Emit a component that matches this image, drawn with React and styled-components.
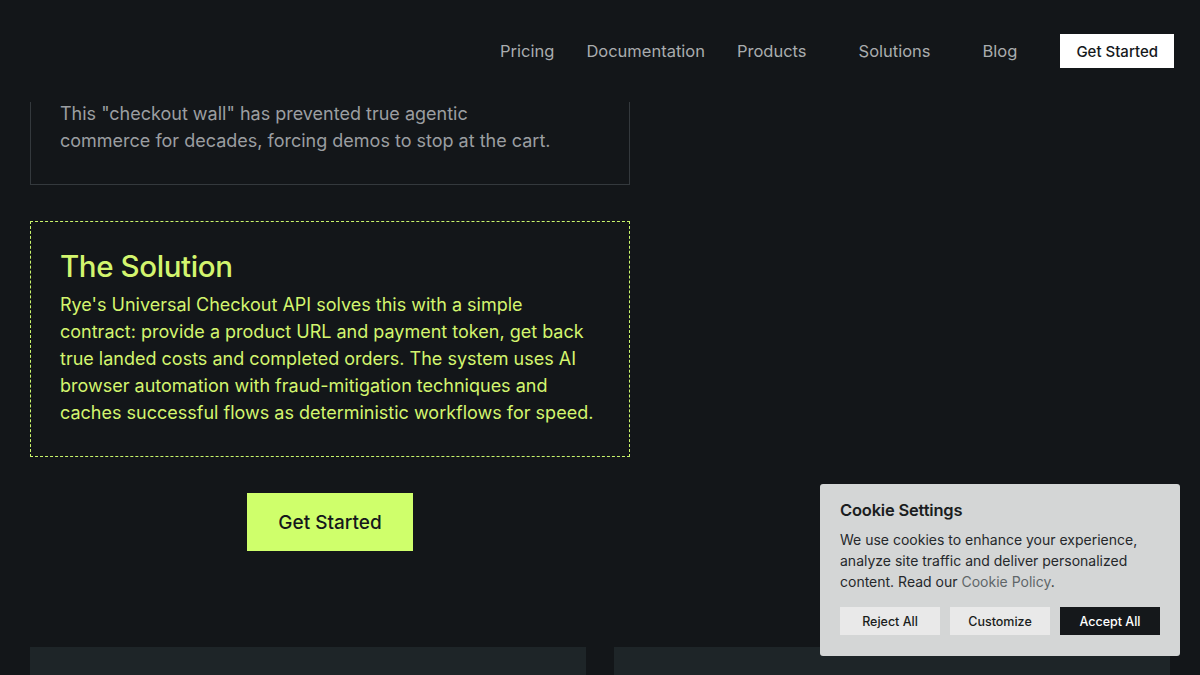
import React from "react";
import styled, { createGlobalStyle } from "styled-components";

const GlobalStyle = createGlobalStyle`
  body {
    margin: 0;
    background: #131619;
    font-family: Inter, "Liberation Sans", sans-serif;
    overflow: hidden;
  }
`;

const Header = styled.header`
  position: fixed;
  top: 0;
  left: 0;
  right: 0;
  height: 102px;
  background: #131619;
  display: flex;
  justify-content: flex-end;
  align-items: center;
  padding-right: 26px;
  z-index: 10;
`;

const Nav = styled.nav`
  display: flex;
  align-items: center;
  gap: 32px;
`;

const NavLink = styled.a`
  color: #a9acae;
  font-size: 16.5px;
  text-decoration: none;
  padding-right: ${(p) => (p.$menu ? "20px" : "0")};
`;

const NavButton = styled.a`
  margin-left: 11px;
  background: #ffffff;
  color: #15181b;
  font-size: 15px;
  font-weight: 500;
  height: 34px;
  padding: 0 16px;
  display: flex;
  align-items: center;
  text-decoration: none;
`;

const Main = styled.main`
  padding: 86px 30px 0;
`;

const Column = styled.div`
  width: 600px;
  display: flex;
  flex-direction: column;
  gap: 36px;
`;

const Card = styled.section`
  border: 1px ${(p) => (p.$accent ? "dashed #c9f56b" : "solid #34393d")};
  padding: ${(p) => (p.$accent ? "26px 29px 30px" : "13px 29px 30px")};
  color: ${(p) => (p.$accent ? "#d3f56e" : "#9b9ea1")};
`;

const Heading = styled.h2`
  margin: 0 0 7px;
  font-size: 29.5px;
  font-weight: 500;
  letter-spacing: -0.4px;
  color: #d3f56e;
`;

const Text = styled.p`
  margin: 0;
  font-size: 18px;
  line-height: 27px;
`;

const CtaRow = styled.div`
  display: flex;
  justify-content: center;
`;

const CtaButton = styled.a`
  background: #cfff6b;
  color: #15181b;
  font-size: 19px;
  font-weight: 500;
  width: 166px;
  height: 58px;
  display: flex;
  align-items: center;
  justify-content: center;
  text-decoration: none;
`;

const Grid = styled.div`
  margin-top: 96px;
  display: grid;
  grid-template-columns: 1fr 1fr;
  gap: 28px;
`;

const Panel = styled.div`
  background: #1e2528;
  height: 200px;
`;

const Cookie = styled.div`
  position: fixed;
  right: 20px;
  bottom: 19px;
  width: 320px;
  padding: 16px 20px 21px;
  background: #d4d6d6;
  border-radius: 3px;
  color: #1a1d20;
  z-index: 20;
`;

const CookieTitle = styled.h3`
  margin: 0 0 9px;
  font-size: 16.5px;
  font-weight: 600;
  letter-spacing: -0.2px;
`;

const CookieText = styled.p`
  margin: 0 0 15px;
  font-size: 14px;
  line-height: 21px;
  color: #25282b;
`;

const PolicyLink = styled.a`
  color: #5f6669;
  text-decoration: none;
`;

const Buttons = styled.div`
  display: flex;
  gap: 10px;
`;

const CookieButton = styled.button`
  width: 100px;
  height: 28px;
  border: none;
  border-radius: 0;
  font-family: inherit;
  font-size: 12.5px;
  font-weight: 500;
  background: ${(p) => (p.$primary ? "#15181b" : "#e9e9e9")};
  color: ${(p) => (p.$primary ? "#ffffff" : "#1a1d20")};
`;

export default function App() {
  return (
    <>
      <GlobalStyle />
      <Header>
        <Nav>
          <NavLink>Pricing</NavLink>
          <NavLink>Documentation</NavLink>
          <NavLink $menu>Products</NavLink>
          <NavLink $menu>Solutions</NavLink>
          <NavLink>Blog</NavLink>
          <NavButton>Get Started</NavButton>
        </Nav>
      </Header>

      <Main>
        <Column>
          <Card>
            <Text>
              This "checkout wall" has prevented true agentic
              <br />
              commerce for decades, forcing demos to stop at the cart.
            </Text>
          </Card>
          <Card $accent>
            <Heading>The Solution</Heading>
            <Text>
              Rye's Universal Checkout API solves this with a simple contract:
              provide a product URL and payment token, get back true landed
              costs and completed orders. The system uses AI browser automation
              with fraud-mitigation techniques and caches successful flows as
              deterministic workflows for speed.
            </Text>
          </Card>
          <CtaRow>
            <CtaButton>Get Started</CtaButton>
          </CtaRow>
        </Column>
        <Grid>
          <Panel />
          <Panel />
        </Grid>
      </Main>

      <Cookie>
        <CookieTitle>Cookie Settings</CookieTitle>
        <CookieText>
          We use cookies to enhance your experience, analyze site traffic and
          deliver personalized content. Read our{" "}
          <PolicyLink>Cookie Policy</PolicyLink>.
        </CookieText>
        <Buttons>
          <CookieButton>Reject All</CookieButton>
          <CookieButton>Customize</CookieButton>
          <CookieButton $primary>Accept All</CookieButton>
        </Buttons>
      </Cookie>
    </>
  );
}
